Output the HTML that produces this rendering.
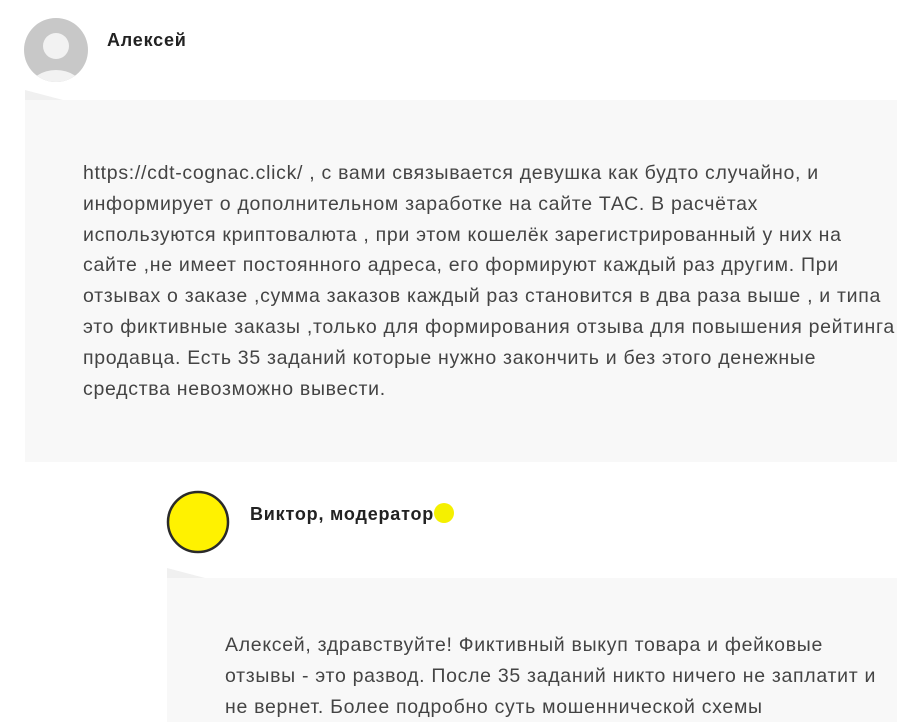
<!DOCTYPE html>
<html><head><meta charset="utf-8"><style>
body{margin:0;width:897px;height:722px;background:#fff;overflow:hidden;position:relative;font-family:"Liberation Sans",sans-serif;}
.name{position:absolute;font-weight:bold;font-size:18px;letter-spacing:0.8px;color:#222;}
.box{position:absolute;background:#f8f8f8;}
.txt{position:absolute;font-size:19.5px;letter-spacing:0.7px;line-height:30.8px;color:#444;white-space:nowrap;}
</style></head><body>
<svg style="position:absolute;left:22px;top:16px" width="70" height="70" viewBox="0 0 70 70">
<defs><clipPath id="c"><circle cx="34" cy="34" r="32"/></clipPath></defs>
<circle cx="34" cy="34" r="32" fill="#c8c8c8"/>
<g clip-path="url(#c)" fill="#f2f2f2"><circle cx="34" cy="30" r="13"/><ellipse cx="34" cy="72" rx="26" ry="18"/></g>
</svg>
<div class="name" style="left:107px;top:30px">Алексей</div>
<div class="box" style="left:25px;top:100px;width:872px;height:362px"></div>
<div style="position:absolute;left:25px;top:90px;width:0;height:0;border-right:38px solid transparent;border-bottom:10px solid #f0f0f0"></div>
<div class="txt" style="left:83px;top:158px">https://cdt-cognac.click/ , с вами связывается девушка как будто случайно, и<br>информирует о дополнительном заработке на сайте ТАС. В расчётах<br>используются криптовалюта , при этом кошелёк зарегистрированный у них на<br>сайте ,не имеет постоянного адреса, его формируют каждый раз другим. При<br>отзывах о заказе ,сумма заказов каждый раз становится в два раза выше , и типа<br>это фиктивные заказы ,только для формирования отзыва для повышения рейтинга<br>продавца. Есть 35 заданий которые нужно закончить и без этого денежные<br>средства невозможно вывести.</div>
<svg style="position:absolute;left:166px;top:490px" width="64" height="64"><circle cx="32" cy="32" r="30" fill="#fff200" stroke="#2a2a2a" stroke-width="2.5"/></svg>
<div class="name" style="left:250px;top:503px">Виктор, модератор&nbsp;<span style="display:inline-block;width:20px;height:20px;border-radius:50%;background:#f5f000;vertical-align:-3px;margin-left:-6px"></span></div>
<div class="box" style="left:167px;top:578px;width:730px;height:144px"></div>
<div style="position:absolute;left:167px;top:568px;width:0;height:0;border-right:38px solid transparent;border-bottom:10px solid #f0f0f0"></div>
<div class="txt" style="left:225px;top:630px">Алексей, здравствуйте! Фиктивный выкуп товара и фейковые<br>отзывы - это развод. После 35 заданий никто ничего не заплатит и<br>не вернет. Более подробно суть мошеннической схемы</div>
</body></html>
